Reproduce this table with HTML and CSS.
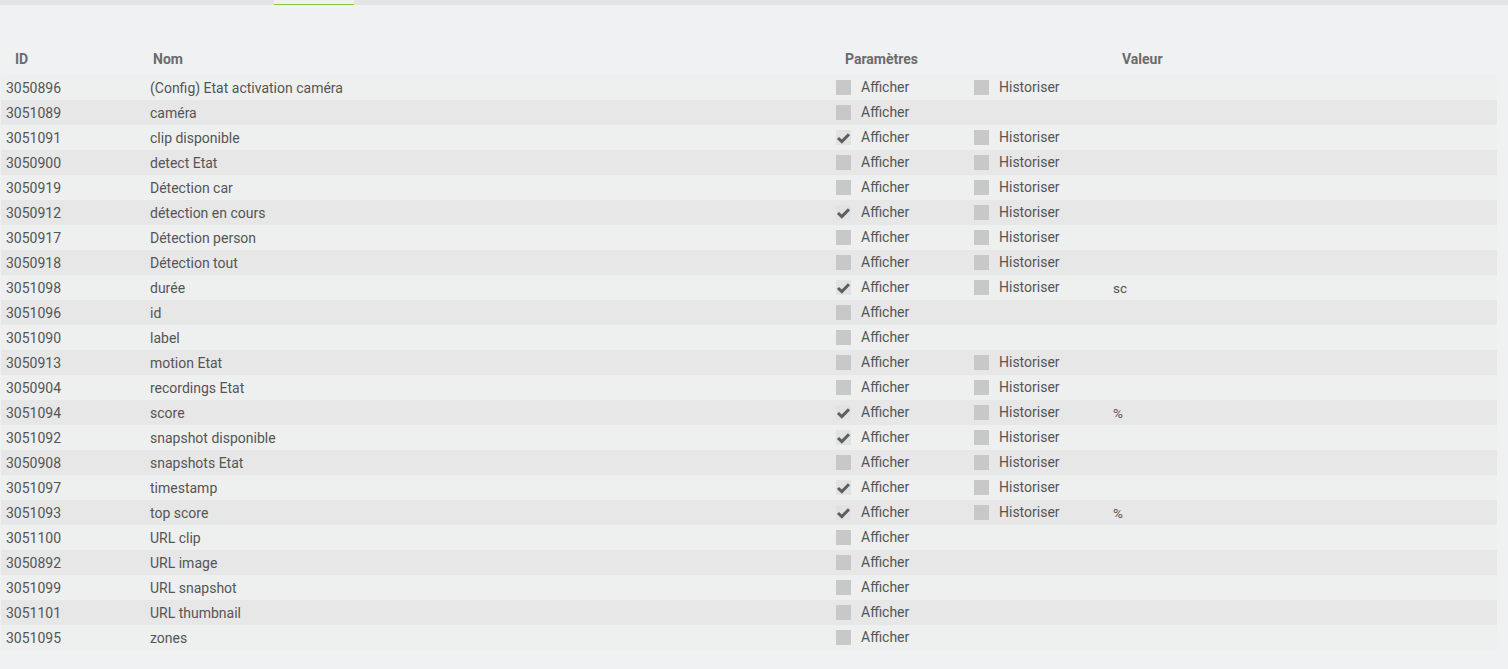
FILE: index.html
```html
<!DOCTYPE html>
<html>
<head>
<meta charset="utf-8">
<link rel="stylesheet" href="styles.css">
</head>
<body>
<div class="tabbar"><div class="tab"></div></div>
<div class="content">
<table class="cmds">
<colgroup><col class="c-id"><col class="c-nom"><col class="c-par"><col class="c-val"></colgroup>
<thead>
<tr><th class="h-id">ID</th><th class="h-nom">Nom</th><th class="h-par">Paramètres</th><th class="h-val">Valeur</th></tr>
</thead>
<tbody id="rows"></tbody>
</table>
</div>
<script src="app.js"></script>
</body>
</html>
```
FILE: app.js
```js
const data = [
  ["3050896","(Config) Etat activation caméra",0,0,""],
  ["3051089","caméra",0,null,""],
  ["3051091","clip disponible",1,0,""],
  ["3050900","detect Etat",0,0,""],
  ["3050919","Détection car",0,0,""],
  ["3050912","détection en cours",1,0,""],
  ["3050917","Détection person",0,0,""],
  ["3050918","Détection tout",0,0,""],
  ["3051098","durée",1,0,"sc"],
  ["3051096","id",0,null,""],
  ["3051090","label",0,null,""],
  ["3050913","motion Etat",0,0,""],
  ["3050904","recordings Etat",0,0,""],
  ["3051094","score",1,0,"%"],
  ["3051092","snapshot disponible",1,0,""],
  ["3050908","snapshots Etat",0,0,""],
  ["3051097","timestamp",1,0,""],
  ["3051093","top score",1,0,"%"],
  ["3051100","URL clip",0,null,""],
  ["3050892","URL image",0,null,""],
  ["3051099","URL snapshot",0,null,""],
  ["3051101","URL thumbnail",0,null,""],
  ["3051095","zones",0,null,""]
];
const check = '<svg viewBox="0 0 15 15" width="15" height="15"><path d="M2 8 L5.8 11.6 L13 4.2" fill="none" stroke="#5e5e5e" stroke-width="3"/></svg>';
function box(on, label){
  return '<span class="opt"><span class="box' + (on ? ' on' : '') + '">' + (on ? check : '') + '</span><span class="lbl">' + label + '</span></span>';
}
const tb = document.getElementById('rows');
tb.innerHTML = data.map(r =>
  '<tr><td class="d-id">' + r[0] + '</td><td class="d-nom">' + r[1] + '</td><td class="d-par"><div class="par">' +
  box(r[2], 'Afficher') + (r[3] === null ? '' : box(r[3], 'Historiser')) +
  '</div></td><td class="d-val">' + r[4] + '</td></tr>'
).join('');
```
FILE: styles.css
```css
html, body {
  margin: 0;
  padding: 0;
  background: #f0f1f2;
  font-family: Roboto, "Liberation Sans", sans-serif;
  color: #555;
}
.tabbar {
  height: 5px;
  background: #e2e3e4;
  display: flex;
}
.tab {
  margin-left: 274px;
  width: 80px;
  height: 4px;
  background: #eff0f1;
  border-bottom: 1px solid #8dc63f;
}
.content {
  padding-top: 40px;
  padding-left: 1px;
}
.cmds {
  border-collapse: collapse;
  table-layout: fixed;
  width: 1496px;
  font-size: 14px;
  line-height: 16px;
}
.c-id { width: 144px; }
.c-nom { width: 686px; }
.c-par { width: 277px; }
th {
  text-align: left;
  font-weight: bold;
  color: #6b6b6b;
  height: 30px;
  padding: 0 0 2px;
  box-sizing: border-box;
  vertical-align: middle;
}
.h-id { padding-left: 14px; }
.h-nom { padding-left: 8px; }
.h-par { padding-left: 14px; }
.h-val { padding-left: 14px; }
td {
  height: 25px;
  padding: 1px 0 0 5px;
  box-sizing: border-box;
  vertical-align: middle;
  white-space: nowrap;
}
tbody tr:nth-child(odd) { background: #eeefef; }
tbody tr:nth-child(even) { background: #e7e7e8; }
td.d-par { padding-top: 0; }
.par {
  display: flex;
  align-items: center;
  height: 24px;
}
.opt {
  display: flex;
  align-items: center;
  width: 138px;
  flex-shrink: 0;
}
.box {
  width: 15px;
  height: 15px;
  background: #c8c8c8;
  margin-right: 10px;
  display: flex;
  flex-shrink: 0;
}
.box.on { background: #e2e2e3; }
.lbl { margin-top: -2px; }
.d-val { font-size: 13.5px; }
```
